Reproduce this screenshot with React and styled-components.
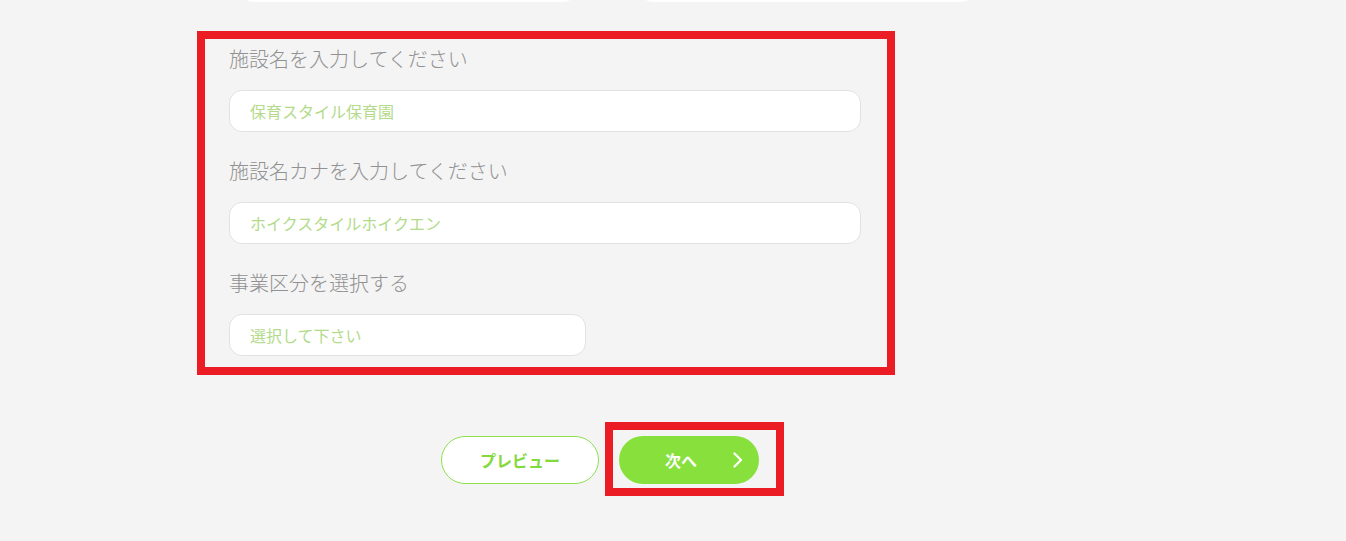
import React from "react";
import styled, { createGlobalStyle } from "styled-components";

const GlobalStyle = createGlobalStyle`
  html, body {
    margin: 0;
    padding: 0;
    background: #f4f4f4;
    font-family: "Noto Sans CJK JP", "Noto Sans", sans-serif;
  }
`;

const Page = styled.div`
  width: 806px;
  margin-left: 197px;
  padding-bottom: 40px;
`;

const CardRow = styled.div`
  display: flex;
  gap: 62px;
  padding-left: 43px;
  margin-top: -58px;
`;

const CardStub = styled.div`
  width: ${(p) => p.$w}px;
  height: 60px;
  background: #fff;
  border-radius: 0 0 14px 14px;
`;

const FormSection = styled.section`
  box-sizing: border-box;
  width: 698px;
  margin-top: 29px;
  border: 8px solid #ec1c24;
  padding: 5px 26px 11px 24px;
  display: flex;
  flex-direction: column;
  gap: 24px;
`;

const Field = styled.div`
  display: flex;
  flex-direction: column;
  gap: 16px;
`;

const Label = styled.label`
  font-size: 20px;
  font-weight: 300;
  line-height: 30px;
  color: #919191;
`;

const TextInput = styled.input`
  box-sizing: border-box;
  width: ${(p) => (p.$short ? "357px" : "100%")};
  height: 42px;
  padding: 0 20px;
  border: 1px solid #e2e2e2;
  border-radius: 13px;
  background: #fff;
  font-family: inherit;
  font-size: 16px;
  font-weight: 400;
  color: #555;
  outline: none;

  &::placeholder {
    color: #b3db8b;
  }
`;

const ButtonRow = styled.div`
  display: flex;
  justify-content: center;
  align-items: center;
  gap: 20px;
  margin-top: 61px;
`;

const PreviewButton = styled.button`
  box-sizing: border-box;
  width: 158px;
  height: 48px;
  border: 1px solid #8fe04e;
  border-radius: 24px;
  background: #fff;
  color: #84d93c;
  font-family: inherit;
  font-size: 16px;
  font-weight: 700;
  cursor: pointer;
`;

const NextWrap = styled.div`
  position: relative;

  &::after {
    content: "";
    position: absolute;
    top: -14px;
    left: -14px;
    right: -25px;
    bottom: -12px;
    border: 8px solid #ec1c24;
    pointer-events: none;
  }
`;

const NextButton = styled.button`
  position: relative;
  box-sizing: border-box;
  width: 140px;
  height: 48px;
  border: none;
  border-radius: 24px;
  background: #87e03b;
  color: #fff;
  font-family: inherit;
  font-size: 16px;
  font-weight: 700;
  cursor: pointer;
  padding: 0;
  display: flex;
  align-items: center;
  justify-content: center;

  svg {
    position: absolute;
    right: 16px;
    top: 16px;
  }
`;

const NextLabel = styled.span`
  margin-right: 16px;
`;

const fields = [
  { label: "施設名を入力してください", placeholder: "保育スタイル保育園" },
  { label: "施設名カナを入力してください", placeholder: "ホイクスタイルホイクエン" },
  { label: "事業区分を選択する", placeholder: "選択して下さい", short: true },
];

export default function App() {
  return (
    <>
      <GlobalStyle />
      <Page>
        <CardRow>
          <CardStub $w={337} />
          <CardStub $w={336} />
        </CardRow>

        <FormSection>
          {fields.map((f) => (
            <Field key={f.label}>
              <Label>{f.label}</Label>
              <TextInput
                placeholder={f.placeholder}
                $short={f.short}
                readOnly={f.short}
              />
            </Field>
          ))}
        </FormSection>

        <ButtonRow>
          <PreviewButton>プレビュー</PreviewButton>
          <NextWrap>
            <NextButton>
              <NextLabel>次へ</NextLabel>
              <svg width="11" height="16" viewBox="0 0 11 16">
                <polyline
                  points="2.5,1.5 9,8 2.5,14.5"
                  fill="none"
                  stroke="#fff"
                  strokeWidth="2.2"
                  strokeLinecap="round"
                  strokeLinejoin="round"
                />
              </svg>
            </NextButton>
          </NextWrap>
        </ButtonRow>
      </Page>
    </>
  );
}
